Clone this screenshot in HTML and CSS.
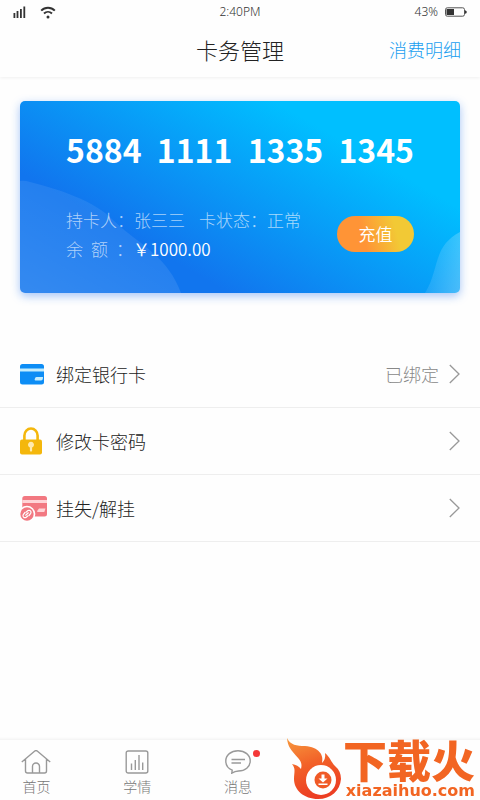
FILE: index.html
```html
<!DOCTYPE html>
<html lang="zh-CN">
<head>
<meta charset="utf-8">
<meta name="viewport" content="width=device-width, initial-scale=1">
<title>卡务管理</title>
<link rel="stylesheet" href="styles.css">
</head>
<body>
<header class="top">
  <div class="status">
    <div class="status-left">
      <svg width="14" height="12" viewBox="0 0 14 12" fill="#333"><path d="M0.5 7h1.8v5H.5zM3.6 5h1.8v7H3.6zM7 3h1.8v9H7zM10.4.5h1.8V12h-1.8z"/></svg>
      <svg width="16" height="13" viewBox="0 0 16 13" fill="none" stroke="#333"><path d="M1.2 4.6C5 .7 11 .7 14.8 4.6" stroke-width="2"/><path d="M4 7.5c2.3-2.2 5.700-2.200 8 0" stroke-width="1.900"/><circle cx="8" cy="11" r="1.500" fill="#333" stroke="none"/></svg>
    </div>
    <span>2:40PM</span>
    <div class="status-right">
      <span>43%</span>
      <svg width="22" height="10" viewBox="0 0 22 10"><rect x=".5" y=".8" width="19" height="8.400" rx="1.800" fill="none" stroke="#555"/><path d="M1.500 2h7.500v6H1.500z" fill="#333"/><path d="M20 3.200q1.800.4 1.800 1.800T20 6.800z" fill="#333"/></svg>
    </div>
  </div>
  <div class="title-bar">
    <h1>卡务管理</h1>
    <a class="detail" href="#detail">消费明细</a>
  </div>
</header>

<main>
  <section class="card">
    <svg class="card-art" viewBox="0 0 440 192" preserveAspectRatio="none">
      <defs>
        <linearGradient id="left" x1="0" y1="1" x2=".8" y2="0"><stop offset="0" stop-color="#fff" stop-opacity=".15"/><stop offset="1" stop-color="#fff" stop-opacity=".04"/></linearGradient>
        <linearGradient id="right" x1="1" y1=".8" x2="0" y2=".5"><stop offset="0" stop-color="#fff" stop-opacity=".26"/><stop offset="1" stop-color="#fff" stop-opacity=".06"/></linearGradient>
      </defs>
      <path d="M0 80Q4 79 10 81C40 89 74 99 94 120C118 143 147 154 161 192H0Z" fill="url(#left)"/>
      <path d="M440 131C412 146 420 168 405 192H440Z" fill="url(#right)"/>
    </svg>
    <div class="number"><span>5884</span><span>1111</span><span>1335</span><span>1345</span></div>
    <div class="card-bottom">
      <div class="info">
        <p><span>持卡人：张三三</span><span>卡状态：正常</span></p>
        <p class="balance"><span>余</span><span>额</span><span>：</span><strong>￥1000.00</strong></p>
      </div>
      <button class="recharge" type="button">充值</button>
    </div>
  </section>

  <nav class="menu">
    <a href="#bank">
      <svg width="28" height="28" viewBox="0 0 28 28"><rect y="4" width="24" height="20.500" rx="2.500" fill="#0d8df5"/><path d="M0 8.500h24v3H0z" fill="#c4edfd"/><path d="M16.500 17h6.500q0 3.500-2 3.500h-5.700q-1-.2-.6-1.200.4-2.300 1.800-2.300z" fill="#c4edfd"/></svg>
      <span>绑定银行卡</span><em>已绑定</em>
      <svg class="arrow" viewBox="0 0 11 20"><path d="M.8 1L10 10L.8 19"/></svg>
    </a>
    <a href="#password">
      <svg width="28" height="28" viewBox="0 0 28 28"><path d="M4.400 14V8.500a6.600 7 0 0 1 13.200 0V14" fill="none" stroke="#f4b70c" stroke-width="2.600"/><rect y="12.500" width="22" height="15" rx="2" fill="#f4b70c"/><path d="M9.900 20.500a3 3 0 1 1 2.200 0V24q-1.100 1-2.200 0z" fill="#ffeaaf"/></svg>
      <span>修改卡密码</span>
      <svg class="arrow" viewBox="0 0 11 20"><path d="M.8 1L10 10L.8 19"/></svg>
    </a>
    <a href="#loss">
      <svg width="28" height="28" viewBox="0 0 28 28"><rect x="2.300" y="2" width="24.700" height="20.500" rx="2.500" fill="#f27881"/><path d="M2.300 6h24.700v3H2.300z" fill="#ffd4d7"/><path d="M19 14.500h6.500L24.300 18h-6.500q-1-.2-.7-1z" fill="#ffd4d7"/><circle cx="7" cy="20" r="8.300" fill="#fff"/><circle cx="7" cy="20" r="6.700" fill="#f27881"/><g fill="none" stroke="#fff" stroke-width="1.200" stroke-linecap="round"><path d="M6 18.200l2-1.600a2 2 0 0 1 2.700 2.800L9 21.500"/><path d="M8 21.800l-2 1.600a2 2 0 0 1-2.700-2.800L5 18.500M5.700 21.200l2.600-2.400"/></g></svg>
      <span>挂失/解挂</span>
      <svg class="arrow" viewBox="0 0 11 20"><path d="M.8 1L10 10L.8 19"/></svg>
    </a>
  </nav>
</main>

<nav class="tabs">
  <a href="#home"><svg width="30" height="24" viewBox="0 0 30 24"><path d="M.8 12L13.500 1.200q1.500-1.200 3 0L29.200 12M4.500 9v12q0 2 2 2h17q2 0 2-2V9M11.500 23v-6.500a3.500 3.500 0 0 1 7 0V23"/></svg>首页</a>
  <a href="#study"><svg width="24" height="24" viewBox="0 0 24 24"><rect x="1.200" y="1" width="21.600" height="22" rx="2"/><path d="M6.500 13.500V20M10.300 10v10M14 5v15M17.700 12.500V20"/></svg>学情</a>
  <a href="#message"><svg width="26" height="24" viewBox="0 0 26 24"><path d="M7.200 20.200C3 18.500.8 15 .8 11C.8 5 6 .8 13 .8S25.200 5 25.200 11S20 21 13.500 21Q10 21.200 6.800 23.200Z"/><path d="M6.500 9.500h13.500M6.500 13h9.500"/></svg>消息<i class="dot"></i></a>
</nav>

<a class="brand" href="#brand">
  <svg width="58" height="62" viewBox="0 0 58 62">
    <defs><linearGradient id="fire" x1="0" y1="0" x2=".3" y2="1"><stop offset="0" stop-color="#f7993e"/><stop offset=".5" stop-color="#f26128"/><stop offset="1" stop-color="#ec3f23"/></linearGradient></defs>
    <path d="M2 0C5 7 12 8 20 8C34 9 39 17 37 25Q41 21 40 15C45 19 46 24 50 28Q56 33 56 41C55 53 46 61 33 61C19 61 9 52 9 41C9 34 11 31 7 26Q13 27 16 31C20 19 3 17 2 0Z" fill="url(#fire)"/>
    <circle cx="36" cy="42" r="15" fill="#fff"/><circle cx="38" cy="42" r="8.500" fill="#f05a27"/>
    <path d="M36.500 36.500h3v4h3l-4.500 4-4.500-4h3zM33.500 45.500h9V47h-9z" fill="#fff"/>
  </svg>
  <span class="brand-text"><b>下载火</b><small>xiazaihuo.com</small></span>
</a>
</body>
</html>
```
FILE: styles.css
```css
* { box-sizing: border-box; }
body {
  margin: 0;
  min-height: 100vh;
  display: flex;
  flex-direction: column;
  overflow-x: hidden;
  background: #fefefe;
  color: #222;
  font-family: "Noto Sans CJK SC", sans-serif;
  font-weight: 300;
}
a { color: inherit; text-decoration: none; }
svg { display: block; flex: none; }
h1, p { margin: 0; font-weight: inherit; }

.top { height: 77px; box-shadow: 0 1px 3px rgba(0, 0, 0, .06); }
.status {
  display: grid;
  grid-template-columns: 1fr auto 1fr;
  align-items: center;
  height: 24px;
  padding: 0 13px;
  font: 300 12px/22px "Noto Sans", sans-serif;
  color: #333;
}
.status-left, .status-right { display: flex; align-items: center; gap: 13px; }
.status-right { justify-content: flex-end; gap: 7px; }
.title-bar {
  display: grid;
  grid-template-columns: 1fr auto 1fr;
  align-items: center;
  height: 50px;
  padding: 0 19px;
}
h1 { grid-column: 2; font-size: 22px; line-height: 32px; }
.detail { justify-self: end; font-size: 18px; color: #1a9ff0; }

main { flex: 1; }
.card {
  position: relative;
  margin: 24px 20px 48px;
  height: 192px;
  padding: 26px 46px 0;
  border-radius: 5px;
  background: linear-gradient(30deg, #1175ee 27%, #00bfff 76%);
  box-shadow: 0 3px 10px rgba(30, 110, 235, .4);
  color: #fff;
}
.card-art { position: absolute; inset: 0; width: 100%; height: 100%; border-radius: 5px; }
.number {
  position: relative;
  display: flex;
  justify-content: space-between;
  font-size: 32px;
  line-height: 44px;
  font-weight: 700;
}
.card-bottom {
  position: relative;
  display: flex;
  justify-content: space-between;
  align-items: center;
  margin-top: 34px;
}
.info { font-size: 17px; line-height: 29px; color: rgba(255, 255, 255, .65); }
.info p { display: flex; gap: 14px; }
.info .balance { gap: 8px; }
.balance strong { margin-left: -8px; font-weight: 350; color: #fff; }
.recharge {
  width: 77px;
  height: 36px;
  padding: 0;
  border: 0;
  border-radius: 18px;
  background: linear-gradient(75deg, #ff9436 35%, #f2c935 75%);
  color: #fff;
  font: 350 17px/36px "Noto Sans CJK SC", sans-serif;
}

.menu a {
  display: flex;
  align-items: center;
  height: 67px;
  padding: 0 20px;
  border-bottom: 1px solid #eee;
  font-size: 18px;
}
.menu span { flex: 1; margin-left: 8px; }
.menu em { margin-right: 10px; font-style: normal; color: #888; }
.arrow { width: 11px; height: 20px; fill: none; stroke: #999; stroke-width: 1.3; }

.tabs {
  display: grid;
  grid-template-columns: repeat(5, 1fr);
  height: 60px;
  padding: 10px 0 0;
  margin: 0 -10px 0 -14px;
  box-shadow: 0 -1px 3px rgba(0, 0, 0, .06);
  font-size: 14px;
  line-height: 24px;
  color: #777;
}
.tabs a { position: relative; display: flex; flex-direction: column; align-items: center; }
.tabs svg { fill: none; stroke: #999; stroke-width: 1.4; }
.dot {
  position: absolute;
  top: 0;
  left: calc(50% + 15px);
  width: 7px;
  height: 7px;
  border-radius: 50%;
  background: #f43838;
}

.brand {
  position: fixed;
  right: 5px;
  bottom: 0;
  display: flex;
  align-items: flex-end;
  color: #f26522;
}
.brand-text { display: flex; flex-direction: column; align-items: flex-end; }
.brand b { font-size: 44px; line-height: 46px; font-weight: 900; }
.brand small { font: 700 16px/18px "DejaVu Sans", sans-serif; }
```
